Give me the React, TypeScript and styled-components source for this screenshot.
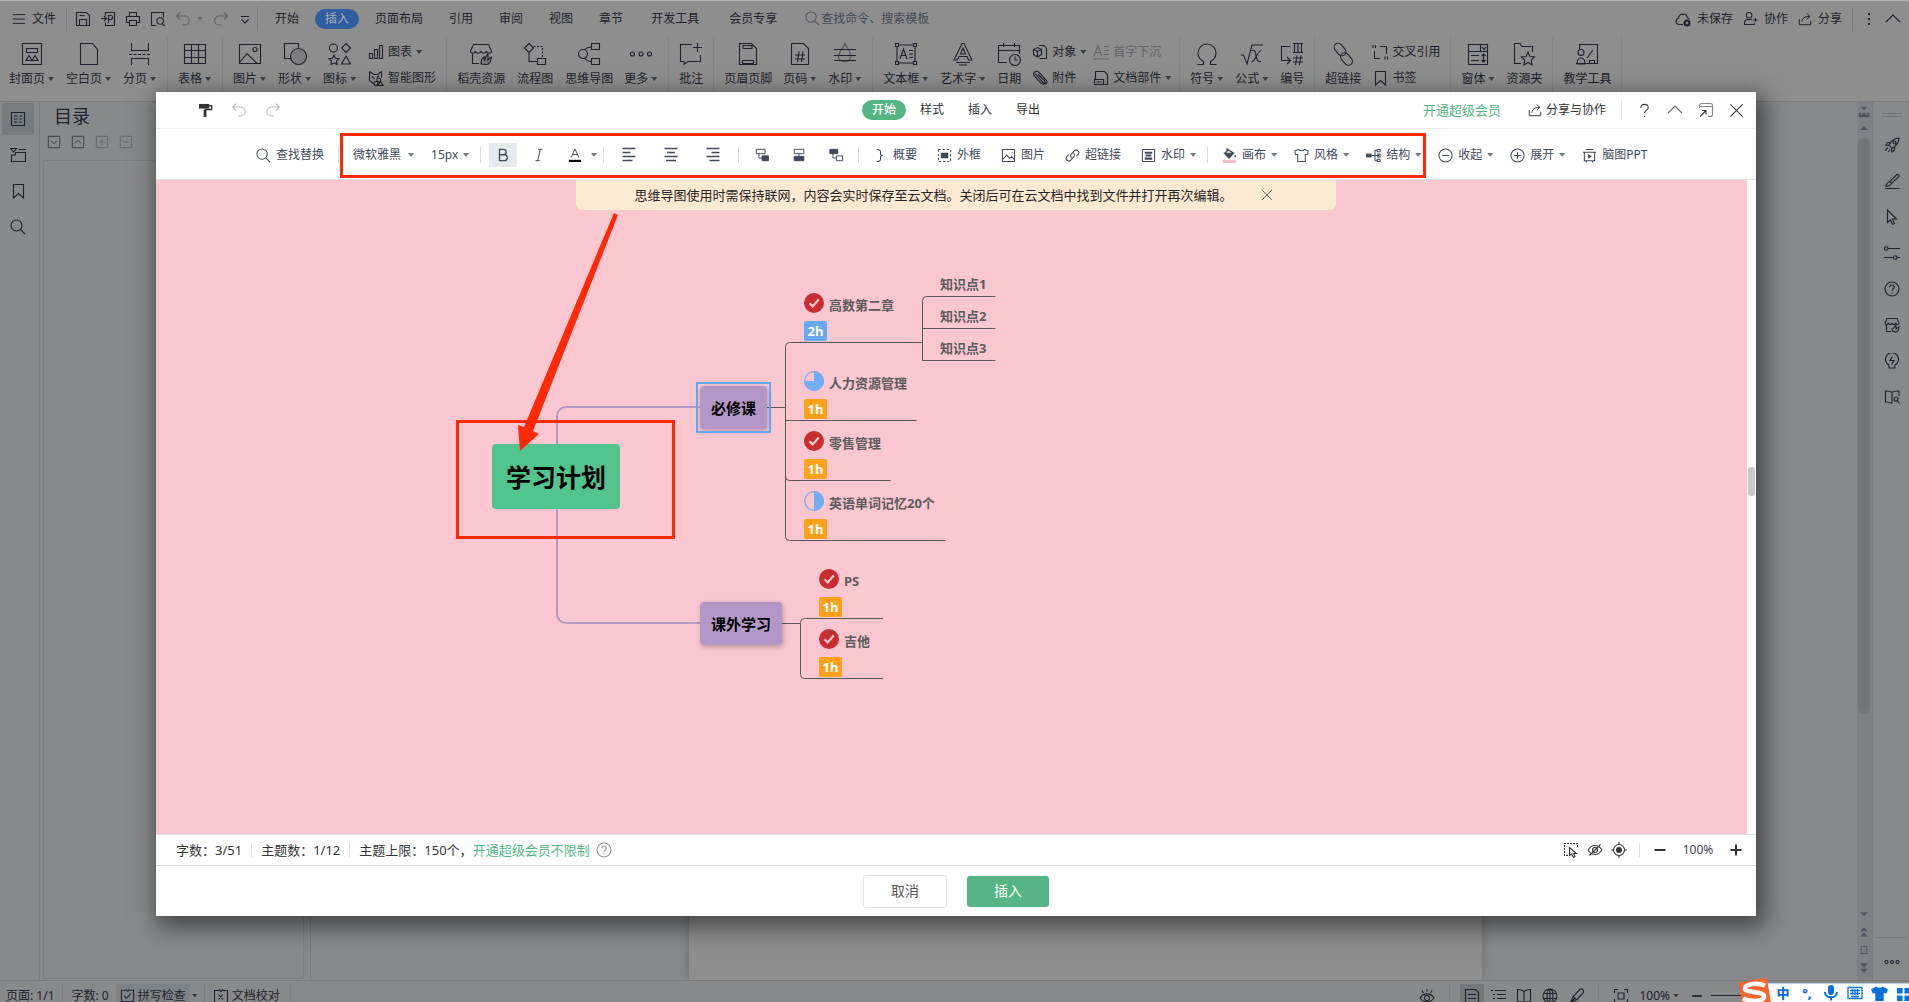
import React from "react";
import styled, { createGlobalStyle, css } from "styled-components";

const FONT = `"Noto Sans", "Noto Sans CJK SC", sans-serif`;
const INK = "#1f222c";
const RED = "#ff2a05";
const GREEN = "#52b582";

const Global = createGlobalStyle`
  * { box-sizing: border-box; }
  html, body { margin: 0; padding: 0; }
  body { font-family: ${FONT}; font-size: 12px; line-height: 18px; color: ${INK}; overflow: hidden; }
  button, input, select { font: inherit; color: inherit; background: none; border: 0; padding: 0; margin: 0; white-space: nowrap; }
  h1 { margin: 0; padding: 0; }
  svg { display: block; flex: none; }
`;

/* ---------- icons ---------- */

type Drawing = React.ReactNode;

const art: Record<string, Drawing> = {
  menu: <path d="M1 3h14M1 8h14M1 13h14" />,
  save: <path d="M1.5 1.5h10l3 3v10h-13zM4.5 14.5v-6h7v6M4.5 4.5h5" />,
  pdf: <path d="M5.500 4.500v-3h9v13h-9v-3M1 7.500h5M4 5l2.500 2.500L4 10M8.500 12V4.500h2a2 2 0 0 1 0 4h-2" />,
  print: <path d="M4.500 5.500v-4h7v4M4 11.500H1.500v-6h13v6H12M4.500 9.500h7v5h-7z" />,
  preview: <path d="M6 14.500H1.500v-13h12v5M12.300 12.600l2.500 2.400M13.500 10a3.300 3.300 0 1 1-6.600 0 3.300 3.300 0 0 1 6.600 0z" />,
  undo: <path d="M5 1.500L1.500 5 5 8.500M1.500 5h8.300a4.500 4.500 0 0 1 0 9H7" />,
  redo: <path d="M11 1.500L14.500 5 11 8.500M14.500 5H6.200a4.500 4.500 0 0 0 0 9H9" />,
  more: <path d="M4 5.500h8M4.500 8.500l3.500 3.500 3.500-3.500" />,
  search: <path d="M12 6.500a5.500 5.500 0 1 1-11 0 5.500 5.500 0 0 1 11 0zM10.500 10.500l4.500 4.500" />,
  cloud: <><path d="M8 13.500H4a3.200 3.200 0 0 1-.4-6.300 4.500 4.500 0 0 1 8.900-.4 3 3 0 0 1 2 1.700" /><circle cx="12" cy="12" r="3.500" fill="currentColor" stroke="none" /><path d="M10.800 10.800l2.400 2.400M13.200 10.800l-2.400 2.400" stroke="#8e8e8e" /></>,
  people: <path d="M9.500 4.500a3 3 0 1 1-6 0 3 3 0 0 1 6 0zM10 9H5c-2.500 0-3.500 1.500-3.500 5.500H12v-2M11 9.500h4.500M13.300 7.500v4" />,
  share: <path d="M1.500 8v6.500h13V10M4.500 11c.5-4 3-6 8.500-6M10 1.500L13.500 5 10 8" />,
  dots: <path d="M8 2v2M8 7v2M8 12v2" strokeWidth="2" />,
  up: <path d="M1 11l7-7 7 7" />,
  close: <path d="M1.500 1.500l13 13M14.500 1.500l-13 13" />,
  question: <path d="M4 5c0-4.700 8-4.700 8 0 0 2.500-4 3-4 6M8 13.500V15" />,
  popout: <><path d="M1.500 6V3.500a2 2 0 0 1 2-2h9a2 2 0 0 1 2 2v9a2 2 0 0 1-2 2H10M1.500 4.500h13" stroke="#888" /><path d="M2 14.500l6-6M4 8.500h4v4" /></>,
  roller: <><path d="M1 1h11v5H1z" fill="#333" stroke="none" /><path d="M12 3h2.500v4H7.500" strokeWidth="1.500" /><path d="M6 7h3v8H6z" fill="#333" stroke="none" /></>,

  cover: <path d="M2.500 1.500h19v21h-19zM6.500 6.500h11v4h-11zM6 18.500l3-5 3 5zM12 18.500l3-5 3 5z" />,
  blank: <path d="M3.500 1.500h12l5 6v15h-17z" />,
  pagebreak: <><path d="M3.500 1v7.500h17V1M3.500 23v-6.500h17V23" /><path d="M1 12.500h22" strokeDasharray="3 1.500" /></>,
  table: <path d="M1.500 2.500h21v19h-21zM1.500 8.500h21M1.500 15.500h21M8.500 2.500v19M15.500 2.500v19" />,
  image: <path d="M1.500 2.500h21v19h-21zM2 20l7-8.500L19 21.500M19 7.500a2 2 0 1 1-4 0 2 2 0 0 1 4 0z" />,
  shape: <><path d="M9 16.500H1.500v-15h14V6" /><circle cx="15.500" cy="14.500" r="8" fill="#7d7d7d" /></>,
  icons: <path d="M9.500 6a4 4 0 1 1-8 0 4 4 0 0 1 8 0zM18 1.500L22.500 6 18 10.500 13.500 6zM18 14l4.500 8h-9zM6 13l1.500 3.200 3.500.5-2.500 2.400.6 3.500L6 21l-3.100 1.600.6-3.500L1 16.700l3.500-.5z" />,
  shop: <><path d="M10 21.500H3.500V11M1.500 9l3-6.500h15l3 6.500c0 3-4.500 3-5 0-.5 3-5 3-5.500 0-.5 3-5 3-5.500 0-.5 3-5 3-5 0z" /><path d="M12 22c0-4 1-6 3-7 0 2 .5 3 .5 4 .5-3 1.500-5 3.500-7v6c1-1.500 2-2.500 3.500-3-.5 4-2 7.500-5 7.500z" fill="#777" /></>,
  flow: <><path d="M6 1.500L10.500 6 6 10.500 1.500 6zM6 10.500v9h8.500M14.500 16.500h8v6h-8z" /><path d="M10.500 4.500h9v12" strokeDasharray="2 1.500" /></>,
  mind: <path d="M10.500 12a4.500 4.500 0 1 1-9 0 4.500 4.500 0 0 1 9 0zM8 8c1-2 2-3 6.500-3M8 16c1 2 2 3.500 6.500 3.500M14.500 1.500h8v6h-8zM14.500 16.500h8v6h-8z" />,
  ellipsis: <path d="M5.500 12a2 2 0 1 1-4 0 2 2 0 0 1 4 0zM14 12a2 2 0 1 1-4 0 2 2 0 0 1 4 0zM22.500 12a2 2 0 1 1-4 0 2 2 0 0 1 4 0z" />,
  comment: <path d="M13 2.500H1.500v17h3.500v3l4-3h12.500V13M18.500 1v9M14 5.500h9" />,
  header: <path d="M3.500 1.500h12l5 5v16h-17zM7 3.500h9v3H7zM6.500 18.500h11v3h-11z" />,
  pageno: <path d="M3.500 1.500h12l5 5v16h-17zM7 13h10M7 17h10M11 9.500L9.500 20M15 9.500L13.500 20" />,
  watermark: <><path d="M12 1.500c2 5 6 8 6 13.500a6.500 6.500 0 0 1-12.500 0C5.500 9.500 10 6.500 12 1.500z" stroke="#555" /><path d="M1 7.500h22M1 13.500h22M1 18.500h22" /></>,
  textbox: <path d="M3 4v16M21 4v16M4 3h16M4 21h16M1.500 1.500h3v3h-3zM19.500 1.500h3v3h-3zM1.500 19.500h3v3h-3zM19.500 19.500h3v3h-3zM6 17l3.500-10L13 17M7 13.500h5M15 8.500h4M15 12h4M15 15.500h4" />,
  wordart: <path d="M11 1.500L3 18h3.500l1.500-3.500h8L17.500 18H21L13 1.500zM12 6l-2.500 6h5zM5 20.500h14M8 23h8" />,
  date: <path d="M10 20.500H1.500v-17h21V12M1.500 8.500h21M6.500 1v4M17.500 1v4M23.500 18a5.500 5.500 0 1 1-11 0 5.500 5.500 0 0 1 11 0zM18 14.500V18h3" />,
  omega: <path d="M2.500 22.500h6v-3C5 17.500 3 14.500 3 11a9 9 0 0 1 18 0c0 3.500-2 6.500-5.500 8.500v3h6" />,
  formula: <path d="M1 13h2.500l3.500 9 5-19h11M11.500 8.500c3-1 4 1 4.500 5s2 7 5 6M21.500 8.500c-4 0-6 11-10 11.500" />,
  numbering: <path d="M10 4.500H1.500v14H10M7 15l3.500 3.500L7 22M13 1.500h10M13 10.500h10M14.500 1.500v9M18 1.500v9M21.500 1.500v9M13 16h10M13 20h10M17 13.500L15.500 23M21 13.500L19.500 23" />,
  chain: <><rect x="2" y="3.500" width="14" height="8" rx="4" transform="rotate(50 9 7.500)" /><rect x="8.500" y="13" width="14" height="8" rx="4" transform="rotate(50 15.500 17)" /></>,
  form: <path d="M2.500 2.500h19v20h-19zM2.500 9.500h19M14.500 2.500v7M16 5l2 2.500L20 5M5 13.500h8M5 18.500h8M17.500 12v8M15.500 14l2-2 2 2M15.500 18l2 2 2-2" />,
  folder: <path d="M9 21.500H2.500v-20H8l2 3h10.500V10M16 10l2 4.500 4.500.5-3.300 3.200 1 4.800L16 20.500 11.800 23l1-4.800L9.500 15l4.500-.5z" />,
  teach: <path d="M4.500 7V2.500h18v19M2 22c0-5 2-6 4-6s4 1 4 6zM9 10.500a3 3 0 1 1-6 0 3 3 0 0 1 6 0zM12 16l6-8M14.500 21.500v-3h5v3M1 21.500h22" />,

  chart: <path d="M1.500 9.500h3v5h-3zM6.500 5.500h3v9h-3zM11.500 1.500h3v13h-3z" />,
  smart: <path d="M1.500 1.500l4.500 3h3.500l4-3v6M1.500 1.500v9l4 3M3.500 6.500l3 2M11 5.500l-2 2M12.800 10a2 2 0 1 1-4 0 2 2 0 0 1 4 0zM10 13.500a2 2 0 1 1-4 0 2 2 0 0 1 4 0zM12.500 11.500l2.500 4h-5z" />,
  object: <path d="M7 1.500h5l2.500 3v10h-7M5.500 3.500l4 2v5l-4 2.500-4-2.500v-5zM1.500 5.500l4 2 4-2M5.500 7.500V13" />,
  clip: <path d="M3 3.500l8.500 9.500c2 2 4.500-.5 2.800-2.600L7 2.500C4-.5 0 3 2.500 6.200l6.500 7c3 2.500 5-.5 3.500-2.500L6 4.500" />,
  dropcap: <path d="M1 12L5 1.500 9 12M2.500 8.500h5M11 2.500h5M11 6.500h5M11 10.500h5M0 15h16" />,
  parts: <path d="M2.500 9V1.500h9l3 3v10H9M1.500 9.500h9v5h-9zM3.500 12h5" />,
  crossref: <path d="M2.500 7v7.500H8M8 2.500h6.500V10M1 1v3M3.500 1v3M13 12.500v3M15.500 12.500v3" />,
  bookmark: <path d="M3.500 1.500h10v13.500l-5-4.500-5 4.500z" />,

  toc: <path d="M1.500 1.500h13v13h-13zM4 5h3.500M4 8h3.500M4 11h3.500M9.500 5H12M9.500 8H12M9.500 11H12" />,
  tree: <path d="M0.500 1.500h6L3.500 5zM8.500 2.500H16M1.500 8v6.500h14v-9h-10V8z" />,
  boxDown: <path d="M1.500 1.500h13v13h-13zM4.500 6.500L8 10l3.500-3.500" />,
  boxUp: <path d="M1.500 1.500h13v13h-13zM4.500 9.500L8 6l3.500 3.500" />,
  boxPlus: <path d="M1.500 1.500h13v13h-13zM5 8h6M8 5v6" />,
  boxMinus: <path d="M1.500 1.500h13v13h-13zM5 8h6" />,
  rocket: <path d="M15 1c-5 0-8 3-10 7l3 3.500C12 9 15 6 15 1zM6 5.500H3.500L1.500 8 5 8.500M10.500 10v3L8 15l-.5-3.500M12 5.500a1.500 1.500 0 1 1-3 0 1.500 1.500 0 0 1 3 0zM4 10.500l-3 3M6 12.500L4 15" />,
  brush: <path d="M1 15.500h14.500M13 1.500L5.500 8.500l2 2L15 3.500c.5-1-1-2.500-2-2zM5.500 8.500c-2.500.5-2.500 3-4 4.500 2 .5 5.500 0 6-2.500" />,
  cursor: <path d="M3.500 1v12.500l3-2.500 2 4.500 2-1-2-4.500h4z" />,
  sliders: <path d="M4 3.500H16M0 12.500h9M13 12.500h3M4 3.500a1.800 1.800 0 1 1-3.600 0 1.800 1.800 0 0 1 3.600 0zM13 12.500a1.800 1.800 0 1 1-3.600 0 1.800 1.800 0 0 1 3.600 0z" />,
  help: <path d="M15 8A7 7 0 1 1 1 8a7 7 0 0 1 14 0zM5.800 6.300c0-3 4.500-3 4.500 0 0 1.500-2.300 1.700-2.300 3.500M8 11.300v1.200" />,
  idea: <path d="M5 12a6.500 6.500 0 1 1 6 0v3H5zM8.500 3.500L6 7.500h4L7.500 11.500" />,
  book: <path d="M8 14.500c-2-1.500-4-1.500-6.500-1.500V2c3 0 5 0 6.500 1.500C9.500 2 11.500 2 15 2v5M8 3.500v11M14 10a2 2 0 1 1-4 0 2 2 0 0 1 4 0zM13.500 12l2 2.500" />,
  leaf: <path d="M7 14.500H2.500V8M1 6l2-4.500h10l2 4.500c0 2-3 2-3.500 0-.5 2-3 2-3.500 0-.5 2-3 2-3.500 0C4 8 1 8 1 6zM8 12c2 0 2-2 4-4v4l3-2c0 3-1 5-3.500 5S8 14 8 12z" />,

  bold: <path d="M4 1.500h4.500a3 3 0 0 1 0 6.200H4zM4 7.700h5.500a3.300 3.300 0 0 1 0 6.800H4z" strokeWidth="1.500" />,
  italic: <path d="M7 1.500h5M4 14.500h5M9.500 1.500l-3 13" />,
  fontcolor: <><path d="M3.500 11L8 1l4.500 10M5 7.500h6" /><path d="M1 13.500h14v2.500H1z" fill="#000" stroke="none" /></>,
  left: <path d="M1.500 1.500h13M1.500 5.500h8M1.500 9.500h13M1.500 13.500h10" strokeWidth="1.300" />,
  center: <path d="M1.500 1.500h13M4 5.500h8M1.500 9.500h13M3 13.500h10" strokeWidth="1.300" />,
  right: <path d="M1.500 1.500h13M6.500 5.500h8M1.500 9.500h13M4.500 13.500h10" strokeWidth="1.300" />,
  child: <><path d="M1.500 1.500h10v5h-10zM4.500 6.500v5H8" /><path d="M8 9h7.500v5.500H8z" fill="currentColor" /></>,
  sibling: <><path d="M2.500 1.500h11v5h-11zM8 6.500V10" /><path d="M2.500 9.500h11v5h-11z" fill="currentColor" /></>,
  parent: <><path d="M1 1.500h9v5H1z" fill="currentColor" /><path d="M4.500 6.500v5H8M8.500 9h7v5.500h-7z" /></>,
  brace: <path d="M4 1.500c3 0 4 .5 4 2.500v2c0 1 .5 2 2.500 2C8.500 8 8 9 8 10v2c0 2-1 2.500-4 2.500" />,
  frame: <><path d="M1.500 1.500h13v13h-13z" strokeDasharray="2.500 2" /><path d="M4 5h8v6H4z" fill="currentColor" stroke="none" /></>,
  pic: <path d="M1.500 1.500h13v13h-13zM2 12l4-4.500 3.500 3.500 2-2L14 12M11.500 5h1" />,
  hyper: <path d="M7 10.500c-1.500-1.500-1.200-3 0-4.200l2.800-3.200c2.700-2.700 6.700 1 4 4L12 9M9 5.500c1.500 1.500 1.200 3 0 4.200l-2.800 3.200c-2.700 2.700-6.700-1-4-4L4 7" />,
  stamp: <><path d="M1.500 1.500h13v13h-13z" /><path d="M4 4h8v2H4zM5 7h6v2H5zM4 10h8v2.500H4z" fill="currentColor" stroke="none" /></>,
  bucket: <><path d="M2.500 5.500h10L7.500 11z" fill="currentColor" /><path d="M3 5.500l4-3.500 5 3.500M5.500 0v3M14 7.500v2.500" strokeWidth="1.400" /><path d="M1 13h14v3H1z" fill="#f7b9c6" stroke="none" /></>,
  shirt: <path d="M5 1.500L1 3l.5 4H4v7.500h8V7h2.500L15 3l-4-1.500c-1 2-5 2-6 0z" />,
  structure: <><path d="M0 6h6v4H0z" fill="currentColor" stroke="none" /><path d="M6 8h8M9.500 2.500v11M9.500 2.500h2M9.500 13.500h2M12 1.500h3v2.500h-3zM12.500 6.500h2.500v3h-2.500zM12 12h3v2.500h-3z" /></>,
  minusC: <path d="M15 8A7 7 0 1 1 1 8a7 7 0 0 1 14 0zM4.500 8h7" />,
  plusC: <path d="M15 8A7 7 0 1 1 1 8a7 7 0 0 1 14 0zM4.500 8h7M8 4.500v7" />,
  ppt: <><path d="M4 1.500h8M1 4.500h14M2.500 4.500v9h11v-9M5.500 13.500L4 15.500M10.500 13.500l1.500 2" /><path d="M6.500 6.500v5l4-2.500z" fill="currentColor" stroke="none" /></>,
  marquee: <><path d="M5 13.500H1.500v-12h13V5" strokeDasharray="2 1" /><path d="M6.500 5.500v8l2-1.500 2 3.500 1.500-1-1.500-3h3z" /></>,
  eyeOff: <path d="M1 8c3.500-6 10.500-6 14 0-3.500 6-10.500 6-14 0zM10.500 8a2.500 2.500 0 1 1-5 0 2.500 2.500 0 0 1 5 0zM2.500 13.500l11-11" />,
  target: <><path d="M13.500 8a5.500 5.500 0 1 1-11 0 5.500 5.500 0 0 1 11 0zM8 0v3M8 13v3M0 8h3M13 8h3" /><circle cx="8" cy="8" r="3" fill="currentColor" stroke="none" /></>,
  minus: <path d="M2.500 8h11" strokeWidth="2" />,
  plus: <path d="M2.500 8h11M8 2.500v11" strokeWidth="2" />,
  checkBox: <path d="M6 2.500H1.500v12h13v-12H10M6 1.500l2 2 2-2M4.500 8.500L7 11l4.500-5" />,
  xBox: <path d="M6 2.500H1.500v12h13v-12H10M6 1.500l2 2 2-2M5.500 6.500l4.500 5M10 6.500l-4.500 5" />,
  eye: <path d="M1 10c3.500-5.500 10.500-5.500 14 0-3.500 5-10.500 5-14 0zM10.500 10a2.500 2.500 0 1 1-5 0 2.500 2.500 0 0 1 5 0zM8 1v2.500M3 2.500L4.500 5M13 2.500L11.500 5" />,
  doc: <path d="M1.500 1.500h10l3 3v10h-13zM4 6.500h8M4 10.500h8" />,
  outline: <path d="M1 2.500h2M5 2.500h11M3 6.500h2M7 6.500h9M3 10.500h2M7 10.500h9M1 14.500h2M5 14.500h11" />,
  openbook: <path d="M8 3.500v12M8 3.500C6 1.500 4 1.500 1.500 1.500v12c2.500 0 4.500 0 6.500 1.500 2-1.500 4-1.500 6.500-1.500v-12C12 1.500 10 1.500 8 3.500z" />,
  globe: <path d="M15 8A7 7 0 1 1 1 8a7 7 0 0 1 14 0zM11 8c0 9-6 9-6 0s6-9 6 0zM8 1v14M1.500 5.500h13M1.500 10.500h13" />,
  pen: <path d="M12.500 1L5 8.500l-2.500 6 6-2.500L15.500 4.500c.5-2-1-4-3-3.500zM5 8.500l3.500 3.500M2.500 14.500L7 10M1 15.500h2" />,
  fit: <path d="M1.500 5V1.500H5M11 1.500h3.500V5M14.500 11v3.500H11M5 14.500H1.500V11M5 5h6v6H5z" />,
  mic: <><rect x="5" y="0" width="6" height="10" rx="3" fill="currentColor" stroke="none" /><path d="M2 7c0 7 12 7 12 0M8 12v3.500" strokeWidth="2" /></>,
  keyboard: <path d="M1 2.500h14v11H1zM3 5.500h10M3 8.500h10M4 11.500h8M5.500 4v6M8 4v6M10.500 4v6" strokeWidth="1.300" />,
  tee: <path d="M5 1.500L0 4l1.500 4L4 7.500v7.500h8V7.500l2.500.5L16 4l-5-2.500c-1 1.500-5 1.500-6 0z" fill="currentColor" stroke="none" />,
  grid: <path d="M1 2h6v6H1zM9 2h6v6H9zM1 10h6v6H1zM9 10h6v6H9z" fill="currentColor" stroke="none" />,
  ooo: <path d="M4 8a1.500 1.500 0 1 1-3 0 1.500 1.500 0 0 1 3 0zM9.500 8a1.500 1.500 0 1 1-3 0 1.500 1.500 0 0 1 3 0zM15 8a1.500 1.500 0 1 1-3 0 1.500 1.500 0 0 1 3 0z" />,
  triUp: <path d="M3 10.500L8 5l5 5.500z" fill="currentColor" stroke="none" />,
  triDown: <path d="M3 5.500L8 11l5-5.500z" fill="currentColor" stroke="none" />,
  dblUp: <path d="M3 7L8 1.500 13 7zM3 14l5-5.500 5 5.500z" fill="currentColor" stroke="none" />,
  dblDown: <path d="M3 2l5 5.500L13 2zM3 9l5 5.500L13 9z" fill="currentColor" stroke="none" />,
  square: <path d="M3.500 2.500h9v11h-9z" strokeWidth="1.500" />,
  ruler: <path d="M4 1h8L8 6zM1 9h3v3h2V9h4v3h2V9h3v6H1z" fill="currentColor" stroke="none" />,
};

const Icon = ({ name, size = 16, box = 16 }: { name: string; size?: number; box?: number }) => (
  <svg width={size} height={size} viewBox={`0 0 ${box} ${box}`} fill="none" stroke="currentColor" strokeWidth={1.1} aria-hidden="true">
    {art[name]}
  </svg>
);

const Caret = styled.i`
  flex: none;
  width: 6px;
  height: 4px;
  background: currentColor;
  opacity: 0.75;
  clip-path: polygon(0 0, 100% 0, 50% 100%);
`;

/* ---------- writer window behind the dialog ---------- */

const Window = styled.div`
  position: relative;
  display: flex;
  flex-direction: column;
  height: 100vh;
  overflow: hidden;
  background: #87898b;
  border-top: 1px solid #b4b4b4;
`;

const MenuBar = styled.header`
  display: flex;
  align-items: center;
  height: 35px;
  padding: 0 8px 0 12px;
  background: #8e8e8e;
`;

const QuickButton = styled.button<{ $gap?: number; $muted?: boolean }>`
  display: flex;
  align-items: center;
  gap: 6px;
  margin-right: ${(p) => p.$gap ?? 10}px;
  color: ${(p) => (p.$muted ? "#5f6268" : INK)};
`;

const VLine = styled.i<{ $h?: number; $m?: number; $tone?: string }>`
  flex: none;
  width: 1px;
  height: ${(p) => p.$h ?? 24}px;
  margin: 0 ${(p) => p.$m ?? 8}px;
  background: ${(p) => p.$tone ?? "#7c7d7f"};
`;

const MenuTab = styled.button<{ $active?: boolean; $wide?: boolean }>`
  height: 20px;
  padding: 0 ${(p) => (p.$wide ? 12 : 10)}px;
  border-radius: 10px;
  line-height: 20px;
  ${(p) => p.$active && css`background: #305ca0; color: #aab2bd;`}
`;

const MenuTabs = styled.nav`
  display: flex;
  padding-left: 3px;
  gap: 6px;
`;

const CommandSearch = styled.label`
  display: flex;
  align-items: center;
  gap: 1px;
  margin-left: 16px;
  margin-right: auto;
  color: #50545f;
  input { width: 120px; outline: 0; }
  input::placeholder { color: #454955; opacity: 1; }
`;

const RibbonBar = styled.div`
  display: flex;
  height: 66px;
  padding: 1px 0 0 9px;
  background: #8e8e8e;
  border-bottom: 1px solid #7b7c7e;
`;

const RibbonGroup = styled.div`
  display: flex;
  gap: 11px;
  padding-right: 10px;
  margin-right: 10px;
  border-right: 1px solid #838485;
`;

const RibbonItem = styled.button<{ $min?: number }>`
  display: flex;
  flex-direction: column;
  align-items: center;
  min-width: ${(p) => p.$min ?? 0}px;
  padding-top: 5px;
`;

const RibbonLabel = styled.span`
  display: flex;
  align-items: center;
  gap: 3px;
  margin-top: 4px;
  ${Caret} { margin-right: 1px; }
`;

const Stack = styled.div`
  display: grid;
  align-content: start;
  justify-items: start;
  grid-auto-flow: column;
  grid-template-rows: 26px 26px;
  column-gap: 9px;
  padding-top: 2px;
`;

const SmallItem = styled.button<{ $off?: boolean }>`
  display: flex;
  align-items: center;
  gap: 4px;
  color: ${(p) => (p.$off ? "#626468" : INK)};
  ${Caret} { margin-right: -2px; }
`;

type Item = { icon: string; label: string; caret?: boolean; off?: boolean; min?: number };
type Entry = Item | { stack: Item[] };

const ribbon: Entry[][] = [
  [
    { icon: "cover", label: "封面页", caret: true },
    { icon: "blank", label: "空白页", caret: true },
    { icon: "pagebreak", label: "分页", caret: true },
  ],
  [{ icon: "table", label: "表格", caret: true }],
  [
    { icon: "image", label: "图片", caret: true },
    { icon: "shape", label: "形状", caret: true },
    { icon: "icons", label: "图标", caret: true },
    { stack: [{ icon: "chart", label: "图表", caret: true }, { icon: "smart", label: "智能图形" }] },
  ],
  [
    { icon: "shop", label: "稻壳资源" },
    { icon: "flow", label: "流程图", min: 38 },
    { icon: "mind", label: "思维导图" },
    { icon: "ellipsis", label: "更多", caret: true },
  ],
  [{ icon: "comment", label: "批注" }],
  [
    { icon: "header", label: "页眉页脚" },
    { icon: "pageno", label: "页码", caret: true },
    { icon: "watermark", label: "水印", caret: true },
  ],
  [
    { icon: "textbox", label: "文本框", caret: true },
    { icon: "wordart", label: "艺术字", caret: true },
    { icon: "date", label: "日期" },
    {
      stack: [
        { icon: "object", label: "对象", caret: true },
        { icon: "clip", label: "附件" },
        { icon: "dropcap", label: "首字下沉", off: true },
        { icon: "parts", label: "文档部件", caret: true },
      ],
    },
  ],
  [
    { icon: "omega", label: "符号", caret: true },
    { icon: "formula", label: "公式", caret: true },
    { icon: "numbering", label: "编号" },
  ],
  [
    { icon: "chain", label: "超链接" },
    { stack: [{ icon: "crossref", label: "交叉引用" }, { icon: "bookmark", label: "书签" }] },
  ],
  [
    { icon: "form", label: "窗体", caret: true },
    { icon: "folder", label: "资源夹" },
  ],
  [{ icon: "teach", label: "教学工具" }],
];

const Ribbon = () => (
  <RibbonBar>
    {ribbon.map((group, g) => (
      <RibbonGroup key={g}>
        {group.map((entry, i) =>
          "stack" in entry ? (
            <Stack key={i}>
              {entry.stack.map((s) => (
                <SmallItem key={s.label} $off={s.off}>
                  <Icon name={s.icon} />
                  {s.label}
                  {s.caret && <Caret />}
                </SmallItem>
              ))}
            </Stack>
          ) : (
            <RibbonItem key={i} $min={entry.min}>
              <Icon name={entry.icon} size={24} box={24} />
              <RibbonLabel>
                {entry.label}
                {entry.caret && <Caret />}
              </RibbonLabel>
            </RibbonItem>
          )
        )}
      </RibbonGroup>
    ))}
  </RibbonBar>
);

const Workspace = styled.div`
  display: flex;
  flex: 1;
  min-height: 0;
`;

const Rail = styled.nav`
  display: flex;
  flex-direction: column;
  align-items: center;
  width: 40px;
  padding: 1px 4px 0 0;
  gap: 4px;
  border-right: 1px solid #7a7b7d;
`;

const RailButton = styled.button<{ $active?: boolean }>`
  display: grid;
  place-items: center;
  width: 32px;
  height: 32px;
  border-radius: 2px;
  background: ${(p) => (p.$active ? "#777b7e" : "none")};
`;

const TocPanel = styled.aside`
  display: flex;
  flex-direction: column;
  width: 271px;
  padding: 0 6px 0 3px;
  border-right: 1px solid #7a7b7d;
`;

const TocTitle = styled.h1`
  padding-left: 11px;
  font-size: 18px;
  font-weight: 400;
  line-height: 28px;
`;

const TocTools = styled.div`
  display: flex;
  gap: 10px;
  padding: 5px 0 0 4px;
`;

const TocTool = styled.button<{ $off?: boolean }>`
  color: ${(p) => (p.$off ? "#66686c" : "#3e4046")};
`;

const TocTree = styled.div`
  flex: 1;
  margin: 11px 0 1px;
  border: 1px solid #7b7d7f;
  border-radius: 2px;
`;

const Desk = styled.main`
  display: flex;
  flex: 1;
  justify-content: center;
`;

const Sheet = styled.div`
  width: 793px;
  margin-left: 3px;
  background: #8e8e8e;
  box-shadow: 0 0 10px rgba(0, 0, 0, 0.2);
`;

const ScrollTrack = styled.div`
  display: flex;
  flex-direction: column;
  align-items: center;
  gap: 2px;
  width: 16px;
  padding: 4px 1px 4px 0;
  background: #7e8083;
  border-right: 1px solid #797a7c;
  color: #50545f;
`;

const ScrollThumb = styled.i`
  width: 12px;
  height: 576px;
  margin-bottom: auto;
  border-radius: 6px;
  background: #737579;
`;

const ScrollButton = styled.button`
  height: 16px;
`;

const SideRail = styled.nav`
  display: flex;
  flex-direction: column;
  align-items: center;
  width: 36px;
  padding: 11px 0 0 2px;
`;

const Grip = styled.i`
  width: 20px;
  height: 4px;
  margin-bottom: 10px;
  border: solid #707274;
  border-width: 1px 0;
`;

const SideButton = styled.button`
  display: grid;
  place-items: center;
  height: 36px;
`;

const SideMore = styled.button`
  align-self: stretch;
  display: grid;
  place-items: center;
  height: 43px;
  padding-top: 6px;
  margin-top: auto;
  border-top: 1px solid #77787a;
`;

const StatusBar = styled.footer`
  height: 22px;
  overflow: hidden;
  border-top: 1px solid #787a7c;
  background: #87898b;
`;

const StatusRow = styled.div`
  display: flex;
  align-items: center;
  height: 29px;
  padding-left: 6px;
`;

const StatusText = styled.span`
  margin-right: 7px;
`;

const StatusButton = styled.button<{ $tint?: string; $w?: number }>`
  display: flex;
  align-items: center;
  justify-content: center;
  gap: 3px;
  height: 24px;
  width: ${(p) => (p.$w ? `${p.$w}px` : "auto")};
  padding: 0 4px;
  background: ${(p) => p.$tint ?? "none"};
`;

const StatusRight = styled.div`
  display: flex;
  align-items: center;
  gap: 2px;
  margin-left: auto;
  padding-right: 68px;
`;

const ZoomRange = styled.input`
  appearance: none;
  width: 130px;
  height: 1px;
  background: ${INK};
  &::-webkit-slider-thumb { appearance: none; width: 6px; height: 12px; background: ${INK}; }
`;

const ImeBar = styled.div`
  position: absolute;
  right: 0;
  bottom: 0;
  display: grid;
  grid-template-columns: repeat(6, 24px);
  place-items: center;
  width: 144px;
  height: 19px;
  padding-left: 6px;
  background: #fff;
  color: #0a70dc;
  border-top: 1px solid #b9cde6;
`;

const ImeLogo = styled.svg`
  position: absolute;
  left: -28px;
  bottom: -9px;
`;

const ImeKey = styled.button`
  font-size: 13px;
  font-weight: 900;
  line-height: 17px;
`;

const quick = ["save", "pdf", "print", "preview"];
const menuTabs = ["开始", "插入", "页面布局", "引用", "审阅", "视图", "章节", "开发工具", "会员专享"];
const sideIcons = ["rocket", "brush", "cursor", "sliders", "help", "leaf", "idea", "book"];

const Background = () => (
  <>
    <MenuBar>
      <QuickButton $gap={2}><Icon name="menu" size={14} />文件</QuickButton>
      <VLine />
      {quick.map((n) => (
        <QuickButton key={n} $gap={9} aria-label={n}><Icon name={n} /></QuickButton>
      ))}
      <QuickButton $muted aria-label="撤销"><Icon name="undo" /><Caret /></QuickButton>
      <QuickButton $muted $gap={8} aria-label="恢复"><Icon name="redo" /></QuickButton>
      <QuickButton $gap={0} aria-label="更多"><Icon name="more" /></QuickButton>
      <VLine $m={4} />
      <MenuTabs>
        {menuTabs.map((t) => (
          <MenuTab key={t} $active={t === "插入"} $wide={t === "开发工具" || t === "会员专享"}>{t}</MenuTab>
        ))}
      </MenuTabs>
      <CommandSearch>
        <Icon name="search" size={15} />
        <input placeholder="查找命令、搜索模板" aria-label="查找命令、搜索模板" />
      </CommandSearch>
      <QuickButton><Icon name="cloud" />未保存</QuickButton>
      <QuickButton><Icon name="people" size={15} />协作</QuickButton>
      <QuickButton $gap={2}><Icon name="share" size={14} />分享</QuickButton>
      <VLine />
      <QuickButton $gap={8} aria-label="选项"><Icon name="dots" /></QuickButton>
      <QuickButton $gap={0} aria-label="收起功能区"><Icon name="up" /></QuickButton>
    </MenuBar>
    <Ribbon />
    <Workspace>
      <Rail>
        <RailButton $active aria-label="目录"><Icon name="toc" /></RailButton>
        <RailButton aria-label="章节"><Icon name="tree" /></RailButton>
        <RailButton aria-label="书签"><Icon name="bookmark" /></RailButton>
        <RailButton aria-label="查找"><Icon name="search" /></RailButton>
      </Rail>
      <TocPanel>
        <TocTitle>目录</TocTitle>
        <TocTools>
          <TocTool aria-label="展开"><Icon name="boxDown" size={14} /></TocTool>
          <TocTool aria-label="收起"><Icon name="boxUp" size={14} /></TocTool>
          <TocTool $off aria-label="增加"><Icon name="boxPlus" size={14} /></TocTool>
          <TocTool $off aria-label="减少"><Icon name="boxMinus" size={14} /></TocTool>
        </TocTools>
        <TocTree />
      </TocPanel>
      <Desk><Sheet /></Desk>
      <ScrollTrack>
        <Icon name="ruler" size={12} />
        <ScrollButton aria-label="向上"><Icon name="triUp" size={12} /></ScrollButton>
        <ScrollThumb />
        <ScrollButton aria-label="向下"><Icon name="triDown" size={12} /></ScrollButton>
        <ScrollButton aria-label="上一页"><Icon name="dblUp" size={12} /></ScrollButton>
        <ScrollButton aria-label="选择对象"><Icon name="square" size={10} /></ScrollButton>
        <ScrollButton aria-label="下一页"><Icon name="dblDown" size={12} /></ScrollButton>
      </ScrollTrack>
      <SideRail>
        <Grip />
        {sideIcons.map((n) => (
          <SideButton key={n} aria-label={n}><Icon name={n} /></SideButton>
        ))}
        <SideMore aria-label="更多"><Icon name="ooo" /></SideMore>
      </SideRail>
    </Workspace>
    <StatusBar>
      <StatusRow>
        <StatusText>页面: 1/1</StatusText>
        <VLine $m={0} />
        <VLine $m={4} $h={0} />
        <StatusText>字数: 0</StatusText>
        <StatusButton $tint="#7d8488"><Icon name="checkBox" size={15} />拼写检查</StatusButton>
        <StatusButton $w={10} aria-label="拼写选项"><Caret /></StatusButton>
        <VLine $m={4} />
        <StatusButton><Icon name="xBox" />文档校对</StatusButton>
        <VLine $m={6} />
        <StatusRight>
          <StatusButton $w={24} aria-label="护眼模式"><Icon name="eye" /></StatusButton>
          <VLine />
          <StatusButton $w={24} $tint="#74787b" aria-label="页面视图"><Icon name="doc" /></StatusButton>
          <StatusButton $w={24} aria-label="大纲"><Icon name="outline" /></StatusButton>
          <StatusButton $w={24} aria-label="阅读版式"><Icon name="openbook" /></StatusButton>
          <StatusButton $w={24} aria-label="Web 版式"><Icon name="globe" /></StatusButton>
          <StatusButton $w={24} aria-label="写作模式"><Icon name="pen" /></StatusButton>
          <VLine />
          <StatusButton $w={24} aria-label="适合页面"><Icon name="fit" /></StatusButton>
          <StatusButton>100%<Caret /></StatusButton>
          <StatusButton $w={24} aria-label="缩小"><Icon name="minus" size={14} /></StatusButton>
          <ZoomRange type="range" aria-label="缩放" />
        </StatusRight>
      </StatusRow>
    </StatusBar>
    <ImeBar>
      <ImeLogo width="34" height="34" viewBox="0 0 34 34" aria-hidden="true">
        <path d="M4 5L28 1a2 2 0 0 1 2 1l4 24a2 2 0 0 1-2 2L8 33a2 2 0 0 1-2-2L2 8a2 2 0 0 1 2-3z" fill="#f8642b" />
        <path d="M28 8.500C20 5 8 7 8 11.500S27 14 27 19.500 12 25 6 21.500" fill="none" stroke="#fff" strokeWidth="4.500" />
      </ImeLogo>
      <ImeKey>中</ImeKey>
      <ImeKey>°,</ImeKey>
      <Icon name="mic" />
      <Icon name="keyboard" />
      <Icon name="tee" size={17} />
      <Icon name="grid" size={15} />
    </ImeBar>
  </>
);

/* ---------- mind map dialog ---------- */

const Layer = styled.div`
  position: absolute;
  inset: 0;
  display: flex;
  padding: 91px 153px 86px 156px;
  pointer-events: none;
`;

const Dialog = styled.section`
  position: relative;
  display: flex;
  flex-direction: column;
  flex: 1;
  min-width: 0;
  background: #fff;
  color: #333;
  box-shadow: 5px 7px 22px 4px rgba(0, 0, 0, 0.5);
  pointer-events: auto;
`;

const DialogHead = styled.div`
  display: grid;
  grid-template-columns: 1fr auto 1fr;
  align-items: center;
  height: 37px;
  padding: 0 12px;
  border-bottom: 1px solid #eeeff0;
`;

const HeadTools = styled.div<{ $gap: number; $end?: boolean }>`
  display: flex;
  align-items: center;
  gap: ${(p) => p.$gap}px;
  justify-content: ${(p) => (p.$end ? "flex-end" : "flex-start")};
`;

const HeadLeft = styled(HeadTools)`
  padding-left: 30px;
`;

const Plain = styled.button<{ $tone?: string; $size?: number }>`
  display: flex;
  align-items: center;
  gap: 4px;
  color: ${(p) => p.$tone ?? "#333"};
  font-size: ${(p) => p.$size ?? 12}px;
`;

const DialogTabs = styled.div`
  display: flex;
  gap: 4px;
`;

const DialogTab = styled.button<{ $active?: boolean }>`
  width: 44px;
  height: 20px;
  border-radius: 10px;
  line-height: 20px;
  ${(p) => p.$active && css`background: ${GREEN}; color: #fff; font-weight: 500;`}
`;

const FormatBar = styled.div`
  display: flex;
  align-items: center;
  height: 51px;
  padding: 2px 0 0 90px;
  border-bottom: 1px solid #dfe0e2;
  color: #414a5c;
`;

const Tool = styled.button`
  display: flex;
  align-items: center;
  gap: 5px;
  flex: none;
  height: 24px;
  padding: 0 10px;
  ${Caret} { margin-right: -3px; }
`;

const Picker = styled.label<{ $w: number }>`
  display: flex;
  align-items: center;
  flex: none;
  padding: 0 10px;
  select { appearance: none; width: ${(p) => p.$w}px; outline: 0; }
  ${Caret} { margin-right: -3px; }
`;

const Toggle = styled.button<{ $on?: boolean; $w?: number; $m?: number }>`
  display: flex;
  align-items: center;
  justify-content: center;
  flex: none;
  width: ${(p) => p.$w ?? 28}px;
  height: 24px;
  margin: 0 ${(p) => p.$m ?? 4}px;
  background: ${(p) => (p.$on ? "#e7eaed" : "none")};
`;

const ColorCaret = styled.button`
  display: grid;
  place-items: center;
  flex: none;
  width: 10px;
  height: 24px;
  margin-left: -4px;
`;

const ToolLine = styled.i`
  flex: none;
  width: 1px;
  height: 16px;
  margin: 0 4px;
  background: #d9dbde;
`;

const CanvasRow = styled.div`
  display: flex;
  flex: 1;
  min-height: 0;
`;

const Canvas = styled.div`
  position: relative;
  flex: 1;
  background: #fac6d0;
  overflow: hidden;
`;

const CanvasScroll = styled.div`
  display: flex;
  flex-direction: column;
  justify-content: flex-end;
  width: 9px;
  padding: 0 1px 338px;
`;

const CanvasThumb = styled.i`
  height: 29px;
  border-radius: 3px;
  background: #c9c9c9;
`;

const Notice = styled.div`
  position: absolute;
  top: 0;
  left: 50%;
  margin-left: -376px;
  display: flex;
  align-items: center;
  width: 760px;
  height: 30px;
  padding: 0 63px 0 59px;
  justify-content: space-between;
  border-radius: 0 0 6px 6px;
  background: #fde8d1;
  color: #262626;
  font-size: 13px;
`;

const Wires = styled.svg`
  position: absolute;
  left: 0;
  top: 0;
`;

const Place = styled.div.attrs<{ $x: number; $y: number }>((p) => ({ style: { left: p.$x, top: p.$y } }))`
  position: absolute;
`;

const RootNode = styled(Place)`
  padding: 2px 14px 0;
  border-radius: 4px;
  background: #52c48d;
  color: #000;
  font-size: 25px;
  font-weight: 700;
  line-height: 63px;
`;

const BranchNode = styled(Place)<{ $selected?: boolean }>`
  padding: 2px 11px 0;
  border-radius: 4px;
  background: #b397c7;
  color: #000;
  font-size: 15px;
  font-weight: 700;
  line-height: 41px;
  box-shadow: 1px 2px 5px rgba(0, 0, 0, 0.25);
  ${(p) =>
    p.$selected &&
    css`
      &::after { content: ""; position: absolute; inset: -4px; border: 2px solid #5fa8f6; }
    `}
`;

const LeafNode = styled(Place)`
  color: #5c5c5c;
  font-size: 13px;
  font-weight: 700;
  line-height: 20px;
`;

const LeafHead = styled.div`
  display: flex;
  align-items: flex-start;
  gap: 5px;
  line-height: 24px;
`;

const Duration = styled.span<{ $long?: boolean }>`
  display: block;
  width: 23px;
  height: 20px;
  margin-top: 4px;
  border-radius: 2px;
  background: ${(p) => (p.$long ? "#63a9f5" : "#ffa019")};
  color: #fff;
  text-align: center;
`;

const Mark = ({ kind }: { kind: "done" | "half" | "most" }) => (
  <svg width="20" height="20" viewBox="0 0 20 20" aria-hidden="true">
    {kind === "done" ? (
      <>
        <circle cx="10" cy="10" r="10" fill="#c62e31" />
        <path d="M5.500 10.200l3.200 3.200 6-6.800" fill="none" stroke="#fac6d0" strokeWidth="2.200" />
      </>
    ) : (
      <>
        <circle cx="10" cy="10" r="9.300" fill="none" stroke="#6fa9f3" strokeWidth="1.200" />
        <path d={kind === "half" ? "M10 0a10 10 0 0 1 0 20z" : "M10 0a10 10 0 1 1-10 10h10z"} fill="#72adf5" />
      </>
    )}
  </svg>
);

const leaves: { x: number; y: number; kind: "done" | "half" | "most"; text: string; time: string }[] = [
  { x: 648, y: 113, kind: "done", text: "高数第二章", time: "2h" },
  { x: 648, y: 191, kind: "most", text: "人力资源管理", time: "1h" },
  { x: 648, y: 251, kind: "done", text: "零售管理", time: "1h" },
  { x: 648, y: 311, kind: "half", text: "英语单词记忆20个", time: "1h" },
  { x: 663, y: 389, kind: "done", text: "PS", time: "1h" },
  { x: 663, y: 449, kind: "done", text: "吉他", time: "1h" },
];

const MindMap = () => (
  <>
    <Wires width="900" height="560" viewBox="0 0 900 560" fill="none" aria-hidden="true">
      <g stroke="#b397c7" strokeWidth="2">
        <path d="M401 300V236a9 9 0 0 1 9-9H545" />
        <path d="M401 300V434a9 9 0 0 0 9 9H545" />
      </g>
      <g stroke="#575757">
        <path d="M611 227.500h18.500M766.500 162.500H633.500a4 4 0 0 0-4 4V356.500a4 4 0 0 0 4 4H789.500M629.500 240.500H760.500M629.500 296.500a4 4 0 0 0 4 4H734.500" />
        <path d="M839.500 116.500H770.500a4 4 0 0 0-4 4V180.500H839.500M766.500 148.500H839.500" />
        <path d="M626 443.500h18.500M727 438.500H648.500a4 4 0 0 0-4 4V494.500a4 4 0 0 0 4 4H727" />
      </g>
    </Wires>
    <RootNode $x={336} $y={264}>学习计划</RootNode>
    <BranchNode $x={544} $y={206} $selected>必修课</BranchNode>
    <BranchNode $x={544} $y={422}>课外学习</BranchNode>
    {leaves.map((l) => (
      <LeafNode key={l.text} $x={l.x} $y={l.y}>
        <LeafHead><Mark kind={l.kind} /><span>{l.text}</span></LeafHead>
        <Duration $long={l.time === "2h"}>{l.time}</Duration>
      </LeafNode>
    ))}
    {["知识点1", "知识点2", "知识点3"].map((t, i) => (
      <LeafNode key={t} $x={784} $y={94 + i * 32}>{t}</LeafNode>
    ))}
  </>
);

const InfoBar = styled.div`
  display: flex;
  align-items: center;
  height: 32px;
  padding: 0 12px 0 20px;
  border-top: 1px solid #dde1e8;
  border-bottom: 1px solid #d9dadb;
  font-size: 13px;
  color: #333;
`;

const InfoLink = styled.a`
  margin-right: 6px;
  color: ${GREEN};
  text-decoration: none;
`;

const InfoTools = styled.div`
  display: flex;
  align-items: center;
  gap: 8px;
  margin-left: auto;
  font-size: 12px;
  color: #3b4253;
`;

const ZoomValue = styled.output`
  width: 44px;
  text-align: center;
`;

const DialogFoot = styled.div`
  display: flex;
  align-items: center;
  justify-content: center;
  gap: 20px;
  height: 50px;
`;

const FootButton = styled.button<{ $primary?: boolean }>`
  width: ${(p) => (p.$primary ? 82 : 84)}px;
  height: ${(p) => (p.$primary ? 31 : 33)}px;
  border-radius: 3px;
  font-size: 14px;
  ${(p) =>
    p.$primary
      ? css`background: #55b584; color: #fff;`
      : css`border: 1px solid #e2e3e4; color: #555;`}
`;

/* red callout drawn over the format tools, the root topic, and the arrow joining them */
const Frame = styled.i<{ $box: [number, number, number, number] }>`
  position: absolute;
  left: ${(p) => p.$box[0]}px;
  top: ${(p) => p.$box[1]}px;
  width: ${(p) => p.$box[2]}px;
  height: ${(p) => p.$box[3]}px;
  border: 3px solid ${RED};
  pointer-events: none;
`;

const Arrow = styled.svg`
  position: absolute;
  left: 350px;
  top: 110px;
  pointer-events: none;
`;

const inserts = [
  { icon: "brace", label: "概要" },
  { icon: "frame", label: "外框" },
  { icon: "pic", label: "图片" },
  { icon: "hyper", label: "超链接" },
  { icon: "stamp", label: "水印", caret: true },
];
const looks = [
  { icon: "bucket", label: "画布", caret: true },
  { icon: "shirt", label: "风格", caret: true },
  { icon: "structure", label: "结构", caret: true },
  { icon: "minusC", label: "收起", caret: true },
  { icon: "plusC", label: "展开", caret: true },
  { icon: "ppt", label: "脑图PPT" },
];

const ToolItem = ({ icon, label, caret }: { icon: string; label: string; caret?: boolean }) => (
  <Tool>
    <Icon name={icon} size={15} />
    {label}
    {caret && <Caret />}
  </Tool>
);

const MindDialog = () => (
  <Layer>
    <Dialog role="dialog" aria-label="思维导图">
      <DialogHead>
        <HeadLeft $gap={18}>
          <Plain aria-label="格式刷"><Icon name="roller" size={15} /></Plain>
          <Plain $tone="#b9bbbe" aria-label="撤销"><Icon name="undo" /></Plain>
          <Plain $tone="#b9bbbe" aria-label="恢复"><Icon name="redo" /></Plain>
        </HeadLeft>
        <DialogTabs>
          {["开始", "样式", "插入", "导出"].map((t) => (
            <DialogTab key={t} $active={t === "开始"}>{t}</DialogTab>
          ))}
        </DialogTabs>
        <HeadTools $gap={15} $end>
          <HeadTools $gap={27}>
            <Plain $tone={GREEN} $size={13}>开通超级会员</Plain>
            <Plain><Icon name="share" size={14} />分享与协作</Plain>
          </HeadTools>
          <VLine $h={20} $m={0} $tone="#e4e5e6" />
          <Plain aria-label="帮助"><Icon name="question" size={15} /></Plain>
          <Plain $tone="#666" aria-label="收起"><Icon name="up" /></Plain>
          <Plain aria-label="弹出"><Icon name="popout" /></Plain>
          <Plain aria-label="关闭"><Icon name="close" size={15} /></Plain>
        </HeadTools>
      </DialogHead>
      <FormatBar>
        <ToolItem icon="search" label="查找替换" />
        <ToolLine />
        <Picker $w={55}>
          <select aria-label="字体"><option>微软雅黑</option></select>
          <Caret />
        </Picker>
        <Picker $w={32}>
          <select aria-label="字号"><option>15px</option></select>
          <Caret />
        </Picker>
        <ToolLine />
        <Toggle $on aria-label="加粗"><Icon name="bold" size={14} /></Toggle>
        <Toggle aria-label="斜体"><Icon name="italic" size={14} /></Toggle>
        <Toggle aria-label="字体颜色"><Icon name="fontcolor" size={14} /></Toggle>
        <ColorCaret aria-label="更多颜色"><Caret /></ColorCaret>
        <ToolLine />
        {["left", "center", "right"].map((n) => (
          <Toggle key={n} $w={42} $m={0} aria-label={n}><Icon name={n} /></Toggle>
        ))}
        <ToolLine />
        {["child", "sibling", "parent"].map((n) => (
          <Toggle key={n} $w={37} $m={0} aria-label={n}><Icon name={n} size={14} /></Toggle>
        ))}
        <ToolLine />
        {inserts.map((t) => <ToolItem key={t.label} {...t} />)}
        <ToolLine />
        {looks.map((t) => <ToolItem key={t.label} {...t} />)}
      </FormatBar>
      <CanvasRow>
        <Canvas>
          <MindMap />
          <Notice>
            思维导图使用时需保持联网，内容会实时保存至云文档。关闭后可在云文档中找到文件并打开再次编辑。
            <Plain $tone="#444" aria-label="关闭提示"><Icon name="close" size={12} /></Plain>
          </Notice>
        </Canvas>
        <CanvasScroll><CanvasThumb /></CanvasScroll>
      </CanvasRow>
      <InfoBar>
        <span>字数：3/51</span>
        <VLine $h={14} $m={9} $tone="#dcdee0" />
        <span>主题数：1/12</span>
        <VLine $h={14} $m={9} $tone="#dcdee0" />
        <span>主题上限：150个，</span>
        <InfoLink href="#vip">开通超级会员不限制</InfoLink>
        <Plain $tone="#8f939b" aria-label="说明"><Icon name="help" /></Plain>
        <InfoTools>
          <Plain aria-label="框选"><Icon name="marquee" /></Plain>
          <Plain aria-label="隐藏"><Icon name="eyeOff" /></Plain>
          <Plain aria-label="定位"><Icon name="target" /></Plain>
          <VLine $h={14} $m={4} $tone="#dcdee0" />
          <Plain aria-label="缩小"><Icon name="minus" /></Plain>
          <ZoomValue>100%</ZoomValue>
          <Plain aria-label="放大"><Icon name="plus" /></Plain>
        </InfoTools>
      </InfoBar>
      <DialogFoot>
        <FootButton>取消</FootButton>
        <FootButton $primary>插入</FootButton>
      </DialogFoot>
      <Frame $box={[184, 41, 1086, 45]} />
      <Frame $box={[300, 328, 219, 119]} />
      <Arrow width="130" height="260" viewBox="506 202 130 260" aria-hidden="true">
        <path d="M614 213l4 2-85 216 6 3-19 17-2-26 6 2z" fill={RED} />
      </Arrow>
    </Dialog>
  </Layer>
);

export default function App() {
  return (
    <>
      <Global />
      <Window>
        <Background />
        <MindDialog />
      </Window>
    </>
  );
}
